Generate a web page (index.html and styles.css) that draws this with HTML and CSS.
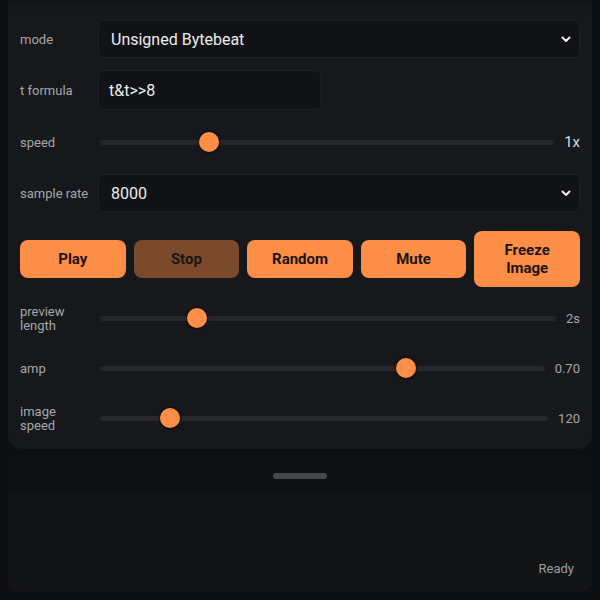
FILE: index.html
```html
<!DOCTYPE html>
<html lang="en">
<head>
<meta charset="utf-8">
<title>Bytebeat</title>
<link rel="stylesheet" href="styles.css">
</head>
<body>
<div class="app">
  <section class="panel">
    <div class="row r38">
      <label class="lbl">mode</label>
      <div class="select">
        <span>Unsigned Bytebeat</span>
        <svg class="chev" width="10" height="7" viewBox="0 0 10 7"><polyline points="1.5,1.5 5,5 8.5,1.5" fill="none" stroke="#f2f2f2" stroke-width="2" stroke-linecap="round" stroke-linejoin="round"/></svg>
      </div>
    </div>
    <div class="row r40">
      <label class="lbl">t formula</label>
      <div class="input"><span>t&amp;t&gt;&gt;8</span></div>
    </div>
    <div class="row r40">
      <label class="lbl">speed</label>
      <div class="slider">
        <div class="track"><div class="thumb" style="left:23.9%"></div></div>
        <span class="val big">1x</span>
      </div>
    </div>
    <div class="row r38">
      <label class="lbl">sample rate</label>
      <div class="select">
        <span>8000</span>
        <svg class="chev" width="10" height="7" viewBox="0 0 10 7"><polyline points="1.5,1.5 5,5 8.5,1.5" fill="none" stroke="#f2f2f2" stroke-width="2" stroke-linecap="round" stroke-linejoin="round"/></svg>
      </div>
    </div>
    <div class="buttons">
      <button class="btn">Play</button>
      <button class="btn dim">Stop</button>
      <button class="btn">Random</button>
      <button class="btn">Mute</button>
      <button class="btn tall">Freeze<br>Image</button>
    </div>
    <div class="row r38">
      <label class="lbl two">preview<br>length</label>
      <div class="slider">
        <div class="track"><div class="thumb" style="left:21.3%"></div></div>
        <span class="val">2s</span>
      </div>
    </div>
    <div class="row r38">
      <label class="lbl">amp</label>
      <div class="slider">
        <div class="track"><div class="thumb" style="left:68.8%"></div></div>
        <span class="val">0.70</span>
      </div>
    </div>
    <div class="row r38">
      <label class="lbl two">image<br>speed</label>
      <div class="slider">
        <div class="track"><div class="thumb" style="left:15.6%"></div></div>
        <span class="val">120</span>
      </div>
    </div>
  </section>
  <section class="bottom">
    <div class="handlebar"><div class="handle"></div></div>
    <div class="status"><span>Ready</span></div>
  </section>
</div>
</body>
</html>
```

FILE: styles.css
```css
html, body {
  margin: 0;
  padding: 0;
  background: #0d0e10;
  font-family: Roboto, "Noto Sans", "Liberation Sans", sans-serif;
  color: #e6e6e6;
}
.app {
  padding: 0 8px 8px;
}
.panel {
  background: linear-gradient(#111215 0, #17181b 12px);
  background-color: #17181b;
  border-radius: 0 0 14px 14px;
  padding: 20px 12px 12px;
  display: flex;
  flex-direction: column;
  gap: 12px;
}
.row {
  display: grid;
  grid-template-columns: 78px 1fr;
  align-items: center;
}
.r38 { height: 38px; }
.r40 { height: 40px; }
.lbl {
  font-size: 13px;
  color: #a6a7aa;
  line-height: 15px;
}
.lbl.two { line-height: 14px; padding-top: 1px; }
.select, .input {
  box-sizing: border-box;
  height: 100%;
  background: #111215;
  border: 1px solid #1d1e21;
  border-radius: 6px;
  display: flex;
  align-items: center;
  font-size: 16px;
  color: #ececec;
}
.select {
  justify-content: space-between;
  padding: 0 8px 0 12px;
}
.input {
  width: 223px;
  padding: 0 10px;
}
.chev { display: block; }
.slider {
  display: flex;
  align-items: center;
  gap: 10px;
  margin-left: 2px;
}
.track {
  flex: 1;
  height: 5px;
  border-radius: 3px;
  background: #26272a;
  position: relative;
}
.thumb {
  position: absolute;
  top: 50%;
  width: 20px;
  height: 20px;
  border-radius: 50%;
  background: #fd8e47;
  box-shadow: 0 0 0 1.5px rgba(0,0,0,0.3);
  transform: translate(-50%, -50%);
}
.val {
  font-size: 13px;
  color: #a6a7aa;
}
.val.big {
  font-size: 15px;
  color: #dcdcdc;
}
.buttons {
  margin-top: 7px;
  display: grid;
  grid-template-columns: repeat(5, 1fr);
  gap: 8px;
  align-items: center;
  height: 56px;
}
.btn {
  height: 38px;
  border: none;
  border-radius: 8px;
  background: #fd8e47;
  color: #1b1410;
  font-family: Roboto, "Noto Sans", "Liberation Sans", sans-serif;
  font-weight: 700;
  font-size: 15px;
  line-height: 18px;
  padding: 0;
}
.btn.dim {
  background: #7a4a2b;
}
.btn.tall {
  height: 56px;
}
.bottom {
  margin-top: 6px;
  border-radius: 0 0 12px 12px;
  background: #131416;
  overflow: hidden;
}
.handlebar {
  height: 40px;
  background: #0f1012;
  display: flex;
  justify-content: center;
  padding-top: 18px;
  box-sizing: border-box;
}
.handle {
  width: 54px;
  height: 6px;
  border-radius: 3px;
  background: #46474a;
}
.status {
  height: 97px;
  display: flex;
  justify-content: flex-end;
  align-items: flex-end;
  padding: 0 18px 16px;
  box-sizing: border-box;
  font-size: 13px;
  color: #9c9da0;
}
```
